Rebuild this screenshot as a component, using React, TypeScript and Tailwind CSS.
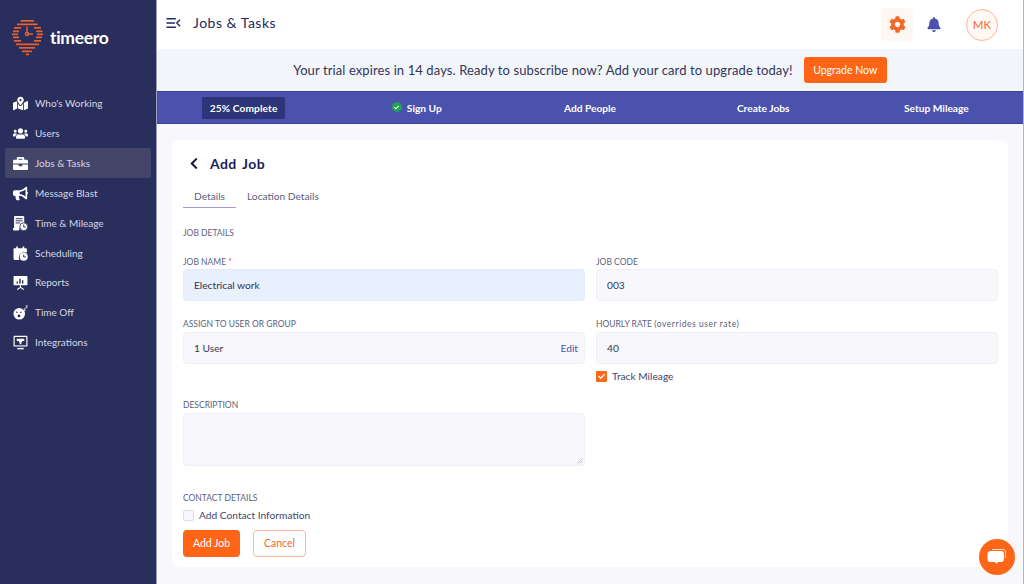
import React from "react";
import { FaUsers, FaBriefcase, FaBullhorn, FaCog, FaBell, FaChevronLeft, FaCheck, FaMapMarkedAlt } from "react-icons/fa";

const W = ({ children }: { children: React.ReactNode }) => (
  <svg viewBox="0 0 14 14" className="w-[15px] h-[15px]" fill="#fff">{children}</svg>
);

const TimeIcon = () => (
  <W>
    <rect x="1" y="0" width="9.5" height="11.5" rx="1" />
    <path d="M2.5 2.5h6.5M2.5 4.5h6.5M2.5 6.5h4" stroke="#2a2e5c" strokeWidth="0.9" />
    <rect x="0" y="11" width="6" height="2.5" rx="1" />
    <circle cx="10" cy="10" r="3.7" stroke="#2a2e5c" strokeWidth="0.8" />
    <path d="M10 8v2.2h1.8" stroke="#2a2e5c" strokeWidth="0.9" fill="none" />
  </W>
);
const CalIcon = () => (
  <W>
    <path d="M1 2h11a1 1 0 0 1 1 1v3H9a5 5 0 0 0-3 7H1.5A1 1 0 0 1 .5 12V3a1 1 0 0 1 .5-1z" />
    <rect x="3" y="0.5" width="1.5" height="3" />
    <rect x="9" y="0.5" width="1.5" height="3" />
    <circle cx="10" cy="10" r="3.8" />
    <path d="M10 8v2.2h1.8" stroke="#2a2e5c" strokeWidth="0.9" fill="none" />
  </W>
);
const ReportIcon = () => (
  <W>
    <rect x="0.5" y="1" width="13" height="8.5" rx="0.7" />
    <path d="M4 8V6M6.5 8V3.5M9 8V5" stroke="#2a2e5c" strokeWidth="1.3" />
    <path d="M7 9.5v2.5M4 13.5l3-2 3 2" stroke="#fff" strokeWidth="1" fill="none" />
  </W>
);
const OffIcon = () => (
  <W>
    <circle cx="5.8" cy="8.2" r="5.4" />
    <path d="M2.8 6.5l1.6.6M6.6 7.1l1.6-.6" stroke="#2a2e5c" strokeWidth="0.9" />
    <circle cx="5.6" cy="10.2" r="1.3" fill="#2a2e5c" />
    <path d="M10 3.5h1.6L10 5.2h1.6M12 .7h1.5L12 2.5h1.5" stroke="#fff" strokeWidth="0.7" fill="none" />
  </W>
);
const IntegrationIcon = () => (
  <W>
    <rect x="0.5" y="0.8" width="13" height="10" rx="0.8" />
    <rect x="1.6" y="1.9" width="10.8" height="7.8" fill="#2a2e5c" />
    <path d="M3.5 3.5h7v2h-2v1.5h-3V5.500h-2z" />
    <rect x="6.2" y="7" width="1.6" height="1.6" />
    <rect x="4" y="12" width="6" height="1.4" />
  </W>
);

const items: [string, React.ReactNode, boolean?][] = [
  ["Who's Working", <FaMapMarkedAlt className="text-white w-[15px] h-[15px]" />],
  ["Users", <FaUsers className="text-white w-[15px] h-[15px]" />],
  ["Jobs & Tasks", <FaBriefcase className="text-white w-[15px] h-[15px]" />, true],
  ["Message Blast", <FaBullhorn className="text-white w-[15px] h-[15px]" />],
  ["Time & Mileage", <TimeIcon />],
  ["Scheduling", <CalIcon />],
  ["Reports", <ReportIcon />],
  ["Time Off", <OffIcon />],
  ["Integrations", <IntegrationIcon />],
];

const stripes: [number, number, number][] = [
  [20, 20.5, 34], [23.5, 17, 37.5], [27, 14, 21], [27, 34, 41], [30.5, 13, 19], [30.5, 36, 42.5],
  [33.5, 12, 18], [33.5, 37, 43], [36.5, 13, 19], [36.5, 36, 42], [40, 14, 21], [40, 34, 41],
  [43.5, 16, 39], [47, 19, 35], [50.5, 22, 32], [53.500, 26, 29],
];

const Logo = () => (
  <svg width="46" height="60" viewBox="0 0 46 60" className="shrink-0">
    {stripes.map(([y, a, b], i) => (
      <rect key={i} x={a} y={y} width={b - a} height="1.7" fill="#e8622f" />
    ))}
    <path d="M27 26.500v7M27 34h6" stroke="#e8622f" strokeWidth="1.4" />
    <circle cx="27" cy="34" r="1.7" fill="none" stroke="#e8622f" strokeWidth="1.2" />
  </svg>
);

const Label = ({ children, className = "" }: { children: React.ReactNode; className?: string }) => (
  <div className={`text-[8.5px] leading-[12px] text-[#5c5f7e] ${className}`}>{children}</div>
);

const Field = ({ children, className = "" }: { children: React.ReactNode; className?: string }) => (
  <div className={`h-[32px] rounded-[4px] border border-[#eeeff6] bg-[#f8f8fc] flex items-center justify-between pl-[10px] pr-[6px] pt-[2px] text-[10.2px] text-[#34365a] ${className}`}>
    {children}
  </div>
);

export default function App() {
  return (
    <div
      className="flex w-[1024px] h-[584px] overflow-hidden bg-[#f7f7fc]"
      style={{ fontFamily: "Lato, 'Noto Sans', sans-serif" }}
    >
      <aside className="w-[156px] shrink-0 bg-[#2a2e5c] flex flex-col">
        <div className="h-[72px] flex items-start">
          <Logo />
          <span className="text-white text-[17.5px] font-bold mt-[27px] ml-[4px] tracking-[-0.3px] leading-[22px]">timeero</span>
        </div>
        <nav className="flex flex-col pt-[16px] px-[5px]">
          {items.map(([name, icon, active]) => (
            <div
              key={name}
              className={`h-[29.85px] flex items-center pl-[8px] pt-[2px] gap-[7px] rounded-[2px] text-[10px] text-[#d6d7e6] ${active ? "bg-[#434568]" : ""}`}
            >
              <span className="w-[15px] flex justify-center">{icon}</span>
              <span>{name}</span>
            </div>
          ))}
        </nav>
      </aside>

      <main className="flex-1 flex flex-col min-w-0 border-l border-r border-l-[#9a9bb5] border-r-[#b4b4bc]">
        <header className="h-[49px] shrink-0 bg-white flex items-center pl-[9px] pr-[25px]">
          <svg width="15" height="12" viewBox="0 0 16 12" fill="none" stroke="#26295a" strokeWidth="1.5" className="mb-[3px]">
            <path d="M0.500 1.500h10M0.500 6h9M0.500 10.500h10M15 2.500L11.500 6l3.500 3.500" />
          </svg>
          <span className="ml-[12px] mb-[4px] text-[14px] text-[#26295a] tracking-[0.5px]">Jobs &amp; Tasks</span>
          <div className="ml-auto flex items-center">
            <div className="w-[32px] h-[33px] rounded-[4px] bg-[#fff7f1] flex items-center justify-center">
              <FaCog className="w-[17px] h-[17px] text-[#f2682a] mb-[1px]" />
            </div>
            <FaBell className="w-[14px] h-[15px] text-[#4a52ad] ml-[14px]" />
            <div className="ml-[25px] w-[32px] h-[32px] rounded-full border border-[#f9b99a] bg-[#fff8f4] flex items-center justify-center text-[11.5px] pt-[1px] text-[#f2682a]">
              MK
            </div>
          </div>
        </header>

        <div className="h-[42px] shrink-0 bg-[#f2f5f9] flex items-center justify-center gap-[11px]">
          <span className="text-[13px] text-[#33355a] tracking-[0.1px] pt-[2px]">
            Your trial expires in 14 days. Ready to subscribe now? Add your card to upgrade today!
          </span>
          <button className="w-[83px] h-[26px] rounded-[3px] bg-[#ff6517] text-white text-[10.5px] pt-[1px]">
            Upgrade Now
          </button>
        </div>

        <div className="h-[33px] shrink-0 bg-[#4a52ad] grid grid-cols-5 items-center text-[10.2px] font-bold text-white border-y border-[#3d4496]">
          <div className="flex justify-center">
            <span className="w-[83px] h-[22px] bg-[#2e3478] rounded-[1px] flex items-center justify-center tracking-[0.1px] pt-[2px]">25% Complete</span>
          </div>
          <div className="flex justify-center items-center gap-[5px]">
            <span className="w-[10px] h-[10px] rounded-full bg-[#23a455] flex items-center justify-center">
              <FaCheck className="w-[5px] h-[5px] text-white" />
            </span>
            <span className="pt-[2px]">Sign Up</span>
          </div>
          <div className="text-center pt-[2px]">Add People</div>
          <div className="text-center pt-[2px]">Create Jobs</div>
          <div className="text-center pt-[2px]">Setup Mileage</div>
        </div>

        <div className="flex-1 min-h-0 pt-[16px] pl-[15px] pr-[15px]">
          <section className="h-[427px] rounded-[6px] bg-white px-[11px] pr-[10px]">
            <div className="flex items-center pt-[12px] pl-[6px] h-[34px]">
              <FaChevronLeft className="w-[10px] h-[13px] text-[#14173f]" />
              <span className="ml-[11px] text-[14px] font-bold text-[#1b1e55] tracking-[0.4px] [word-spacing:2px]">Add Job</span>
            </div>
            <div className="flex mt-[9px] text-[10.2px] text-[#5c5f7e] h-[25px]">
              <div className="w-[53px] text-center border-b-[1.5px] border-[#9a9fd0] pt-[6px]">Details</div>
              <div className="ml-[11px] pt-[6px]">Location Details</div>
            </div>

            <Label className="mt-[19px]">JOB DETAILS</Label>

            <div className="grid grid-cols-2 gap-x-[11px] mt-[17px]">
              <div>
                <Label>
                  JOB NAME <span className="text-[#e5484d]">*</span>
                </Label>
                <Field className="mt-[1px] !bg-[#e8f0fe] !border-[#e3ebfa] !text-[#33344a]">Electrical work</Field>
              </div>
              <div>
                <Label>JOB CODE</Label>
                <Field className="mt-[1px]">003</Field>
              </div>
              <div className="mt-[17px]">
                <Label>ASSIGN TO USER OR GROUP</Label>
                <Field className="mt-[2px]">
                  1 User
                  <span className="text-[#4a52ad]">Edit</span>
                </Field>
              </div>
              <div className="mt-[17px]">
                <Label>
                  HOURLY RATE <span className="tracking-[0.55px]">(overrides user rate)</span>
                </Label>
                <Field className="mt-[2px]">40</Field>
                <div className="flex items-center mt-[7px] text-[10.2px] text-[#44466a] leading-[11px]">
                  <span className="w-[11px] h-[11px] rounded-[1px] bg-[#ff6517] flex items-center justify-center">
                    <FaCheck className="w-[7px] h-[7px] text-white" />
                  </span>
                  <span className="ml-[5px]">Track Mileage</span>
                </div>
              </div>
              <div className="mt-[17px]">
                <Label>DESCRIPTION</Label>
                <div className="relative mt-[2px] h-[53px] rounded-[4px] border border-[#eeeff6] bg-[#f8f8fc]">
                  <svg width="6" height="6" viewBox="0 0 6 6" className="absolute right-[1px] bottom-[1px]" stroke="#9a9ba8" strokeWidth="0.6">
                    <path d="M0.500 5.500L5.500 0.500M3 5.500L5.500 3" />
                  </svg>
                </div>
              </div>
            </div>

            <Label className="mt-[26px]">CONTACT DETAILS</Label>
            <div className="flex items-center mt-[6px] text-[10.2px] text-[#44466a] leading-[11px]">
              <span className="w-[11px] h-[11px] rounded-[2px] border border-[#dcdde9] bg-[#f8f8fc]" />
              <span className="ml-[5px]">Add Contact Information</span>
            </div>
            <div className="flex items-center gap-[13px] mt-[9px]">
              <button className="w-[57px] h-[27px] rounded-[4px] bg-[#ff6517] text-white text-[10.5px] pt-[1px]">Add Job</button>
              <button className="w-[53px] h-[27px] rounded-[4px] border border-[#f9b99a] bg-white text-[#f2682a] text-[10.5px] pt-[1px]">Cancel</button>
            </div>
          </section>
        </div>
      </main>

      <button className="absolute left-[979px] top-[539px] w-[36px] h-[36px] rounded-full bg-[#ff6517] flex items-center justify-center">
        <svg width="20" height="18" viewBox="0 0 20 18">
          <path d="M5 1.500h11a2.500 2.500 0 0 1 2.500 2.500v6" fill="none" stroke="#ffd9c4" strokeWidth="1" />
          <path d="M3.500 3h10.500a3 3 0 0 1 3 3v5a3 3 0 0 1-3 3h-3l-1.500 2-1.500-2h-4.500a3 3 0 0 1-3-3V6a3 3 0 0 1 3-3z" fill="#fff" />
        </svg>
      </button>
    </div>
  );
}
